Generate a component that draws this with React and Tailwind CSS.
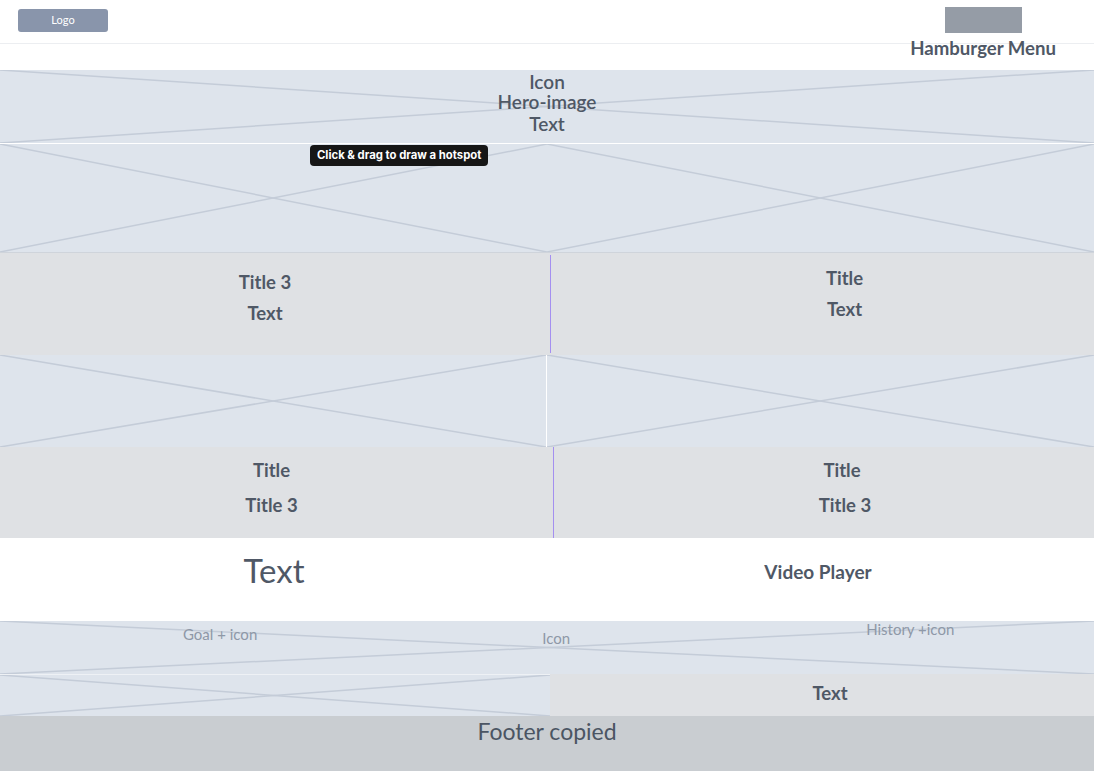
import React from "react";

function Ph({ className = "", children }) {
  return (
    <div className={"relative overflow-hidden bg-[#dee4ec] " + className}>
      <svg
        className="absolute inset-0 h-full w-full"
        viewBox="0 0 100 100"
        preserveAspectRatio="none"
      >
        <line x1="0" y1="0" x2="100" y2="100" stroke="#c4ccd8" strokeWidth="1.5" vectorEffect="non-scaling-stroke" />
        <line x1="0" y1="100" x2="100" y2="0" stroke="#c4ccd8" strokeWidth="1.5" vectorEffect="non-scaling-stroke" />
      </svg>
      <div className="relative h-full">{children}</div>
    </div>
  );
}

export default function App() {
  return (
    <div className="w-[1094px] h-[771px] overflow-hidden bg-white font-['Lato','Noto_Sans',sans-serif] text-[#4f5866]">
      {/* header */}
      <header className="flex h-[44px] items-start justify-between border-b border-[#eceef1] pl-[18px] pr-[38px]">
        <div className="mt-[9px] flex h-[23px] w-[90px] items-center justify-center rounded-[3px] bg-[#8995ab] text-[11px] text-white">
          Logo
        </div>
        <div className="mt-[7px] flex flex-col items-center">
          <div className="h-[26px] w-[77px] bg-[#959ca6]" />
          <div className="mt-[5px] text-[18.6px] font-bold leading-[20px] whitespace-nowrap">Hamburger Menu</div>
        </div>
      </header>
      <div className="h-[26px]" />

      {/* hero */}
      <div className="relative">
        <Ph className="h-[73px]">
          <div className="flex flex-col items-center pt-[2px] text-[19px] font-semibold leading-[20px]">
            <div>Icon</div>
            <div>Hero-image</div>
            <div className="mt-[2px]">Text</div>
          </div>
        </Ph>
        <div className="h-px bg-white" />
        <div className="flex h-[108px]">
          <Ph className="h-full w-[547px]" />
          <Ph className="h-full flex-1" />
        </div>
        <div className="absolute left-[310px] top-[75px] rounded-[4px] bg-[#161616] px-[7px] py-[4px] font-['Inter',sans-serif] text-[11.3px] font-bold leading-[13px] text-white whitespace-nowrap">
          Click &amp; drag to draw a hotspot
        </div>
      </div>

      {/* row 3 */}
      <div className="flex h-[103px] border-t border-[#cfd4db] bg-[#dfe1e4]">
        <div className="flex w-[550px] flex-col items-center pr-[20px] pt-[19px] text-[18.5px] font-bold leading-[20px]">
          <div>Title 3</div>
          <div className="mt-[11px]">Text</div>
        </div>
        <div className="mt-[2px] h-[98px] w-px bg-[#a48ff0]" />
        <div className="flex flex-1 flex-col items-center pl-[44px] pt-[15px] text-[18.5px] font-bold leading-[20px]">
          <div>Title</div>
          <div className="mt-[11px]">Text</div>
        </div>
      </div>

      {/* row 4 */}
      <div className="flex h-[92px]">
        <Ph className="h-full w-[546px]" />
        <div className="w-px bg-white" />
        <Ph className="h-full flex-1" />
      </div>

      {/* row 5 */}
      <div className="flex h-[91px] bg-[#dfe1e4]">
        <div className="flex w-[553px] flex-col items-center pr-[10px] pt-[13px] text-[18.5px] font-bold leading-[20px]">
          <div>Title</div>
          <div className="mt-[15px]">Title 3</div>
        </div>
        <div className="w-px bg-[#a48ff0]" />
        <div className="flex flex-1 flex-col items-center pl-[42px] pt-[13px] text-[18.5px] font-bold leading-[20px]">
          <div className="mr-[6px]">Title</div>
          <div className="mt-[15px]">Title 3</div>
        </div>
      </div>

      {/* row 6 */}
      <div className="flex h-[83px] bg-white">
        <div className="flex w-[548px] justify-center pt-[12px] text-[33px] leading-[40px]">
          <span>Text</span>
        </div>
        <div className="flex flex-1 justify-center pr-[6px] pt-[24px] text-[19px] font-bold leading-[20px]">
          <span>Video Player</span>
        </div>
      </div>

      {/* row 7 */}
      <Ph className="h-[53px]">
        <div className="flex items-start pl-[183px] text-[15px] leading-[14px] text-[#8e98a7] whitespace-nowrap">
          <span className="mt-[6px]">Goal + icon</span>
          <span className="ml-[285px] mt-[10px]">Icon</span>
          <span className="ml-[296px] mt-[1px]">History +icon</span>
        </div>
      </Ph>

      {/* row 8 */}
      <div className="flex h-[42px]">
        <Ph className="h-full w-[550px] border-t border-[#eef1f5]" />
        <div className="flex flex-1 items-start justify-center bg-[#dfe1e4] pl-[16px] pt-[9px] text-[18.5px] font-bold leading-[20px]">
          Text
        </div>
      </div>

      {/* footer */}
      <footer className="flex h-[55px] justify-center bg-[#c9cdd1] pt-[2px] text-[23px] leading-[26px] text-[#4b5563]">
        Footer copied
      </footer>
    </div>
  );
}
